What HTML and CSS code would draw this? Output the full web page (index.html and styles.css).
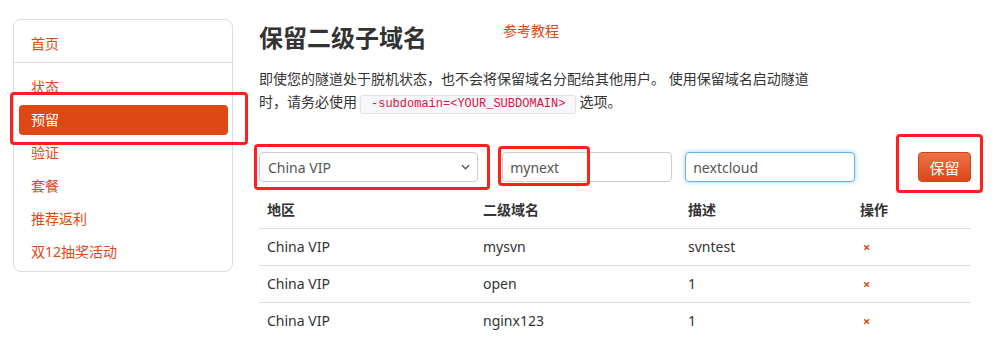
FILE: index.html
```html
<!DOCTYPE html>
<html lang="zh-CN">
<head>
  <meta charset="UTF-8" />
  <title>保留二级子域名</title>
  <link rel="stylesheet" href="styles.css">
</head>
<body>
  <div class="page">
    <div class="sidebar">
      <div class="side-top">
        <a class="nav-item" href="#">首页</a>
      </div>
      <div class="side-list">
        <a class="nav-item" href="#">状态</a>
        <a class="nav-item active" href="#">预留</a>
        <a class="nav-item" href="#">验证</a>
        <a class="nav-item" href="#">套餐</a>
        <a class="nav-item" href="#">推荐返利</a>
        <a class="nav-item" href="#">双12抽奖活动</a>
      </div>
    </div>

    <div class="main">
      <div class="title-row">
        <h1>保留二级子域名</h1>
        <a class="guide" href="#">参考教程</a>
      </div>
      <p class="intro">即使您的隧道处于脱机状态，也不会将保留域名分配给其他用户。 使用保留域名启动隧道时，请务必使用<code>-subdomain=&lt;YOUR_SUBDOMAIN&gt;</code>选项。</p>

      <form class="reserve-form">
        <div class="select">
          <span>China VIP</span>
          <svg class="chevron" viewBox="0 0 10 6"><path d="M1 1l4 4 4-4" fill="none" stroke="#555" stroke-width="1.4"/></svg>
        </div>
        <input class="field field-name" type="text" value="mynext">
        <input class="field field-desc focus" type="text" value="nextcloud">
        <button class="btn-reserve" type="button">保留</button>
      </form>

      <table class="domains">
        <colgroup>
          <col style="width:216px"><col style="width:205px"><col style="width:172px"><col>
        </colgroup>
        <thead>
          <tr><th>地区</th><th>二级域名</th><th>描述</th><th>操作</th></tr>
        </thead>
        <tbody>
          <tr><td>China VIP</td><td>mysvn</td><td>svntest</td><td><span class="del">×</span></td></tr>
          <tr><td>China VIP</td><td>open</td><td>1</td><td><span class="del">×</span></td></tr>
          <tr><td>China VIP</td><td>nginx123</td><td>1</td><td><span class="del">×</span></td></tr>
        </tbody>
      </table>
    </div>
  </div>

  <!-- annotation boxes drawn over the screenshot -->
  <div class="mark mark-nav"></div>
  <div class="mark mark-select"></div>
  <div class="mark mark-name"></div>
  <div class="mark mark-btn"></div>
</body>
</html>
```

FILE: styles.css
```css
html, body {
  margin: 0;
  background: #fff;
  color: #333;
  font-family: "Noto Sans", "Noto Sans CJK SC", sans-serif;
  font-size: 14px;
}

.page {
  display: flex;
  align-items: flex-start;
}

.sidebar {
  width: 218px;
  margin: 19px 0 0 13px;
  border: 1px solid #ddd;
  border-radius: 8px;
}

.side-top {
  padding: 9px 5px 3px 5px;
  border-bottom: 1px solid #ddd;
}

.side-list {
  display: flex;
  flex-direction: column;
  gap: 3px;
  padding: 9px 4px 4px 5px;
}

.nav-item {
  display: block;
  height: 30px;
  line-height: 30px;
  padding-left: 12px;
  color: #dd4814;
  text-decoration: none;
  border-radius: 4px;
}

.nav-item.active {
  background: #dd4814;
  color: #fff;
}

.main {
  width: 712px;
  margin: 23px 0 0 26px;
}

.title-row {
  display: flex;
  align-items: flex-start;
}

h1 {
  margin: 0;
  font-size: 24px;
  line-height: 30px;
  font-weight: 700;
  color: #333;
}

.guide {
  margin: -2px 0 0 76px;
  color: #dd4814;
  text-decoration: none;
  font-size: 14px;
  line-height: 20px;
}

.intro {
  max-width: 556px;
  margin: 14px 0 0;
  line-height: 23px;
}

.intro code {
  display: inline-block;
  line-height: 17px;
  vertical-align: 0;
  font-family: "Liberation Mono", "DejaVu Sans Mono", monospace;
  font-size: 12px;
  color: #dd1144;
  background: #f7f7f9;
  border: 1px solid #e1e1e8;
  border-radius: 3px;
  padding: 0 10px;
  margin: 0 3px;
}

.reserve-form {
  display: flex;
  align-items: center;
  margin-top: 38px;
  height: 30px;
}

.select {
  box-sizing: border-box;
  width: 220px;
  height: 30px;
  display: flex;
  align-items: center;
  justify-content: space-between;
  padding: 0 7px 0 8px;
  border: 1px solid #ccc;
  border-radius: 4px;
  color: #555;
}

.chevron {
  width: 9px;
  height: 6px;
}

.field {
  box-sizing: border-box;
  width: 170px;
  height: 30px;
  padding: 0 7px;
  border: 1px solid #ccc;
  border-radius: 4px;
  font: inherit;
  color: #555;
  outline: none;
}

.field-name {
  margin-left: 24px;
}

.field-desc {
  margin-left: 13px;
}

.field.focus {
  border-color: #66afe9;
  box-shadow: 0 0 5px rgba(102, 175, 233, 0.6);
}

.btn-reserve {
  margin-left: 63px;
  width: 53px;
  height: 30px;
  border: 1px solid #c9461b;
  border-radius: 4px;
  background: linear-gradient(#ed7246, #d9481a);
  color: #fff;
  font: inherit;
  font-size: 15px;
  padding: 0;
}

.domains {
  width: 712px;
  margin-top: 10px;
  border-collapse: collapse;
  table-layout: fixed;
}

.domains th,
.domains td {
  text-align: left;
  padding: 8px;
  line-height: 20px;
}

.domains th {
  font-weight: 700;
}

.domains td {
  border-top: 1px solid #ddd;
}

.del {
  color: #dd4814;
  font-size: 13px;
  font-weight: 700;
  padding-left: 3px;
}

.mark {
  position: absolute;
  border: 3px solid #ff1f1f;
  border-radius: 4px;
  box-sizing: border-box;
}

.mark-nav { left: 10px; top: 92px; width: 238px; height: 53px; }
.mark-select { left: 254px; top: 144px; width: 236px; height: 46px; }
.mark-name { left: 498px; top: 146px; width: 92px; height: 40px; }
.mark-btn { left: 896px; top: 134px; width: 87px; height: 59px; }
```
